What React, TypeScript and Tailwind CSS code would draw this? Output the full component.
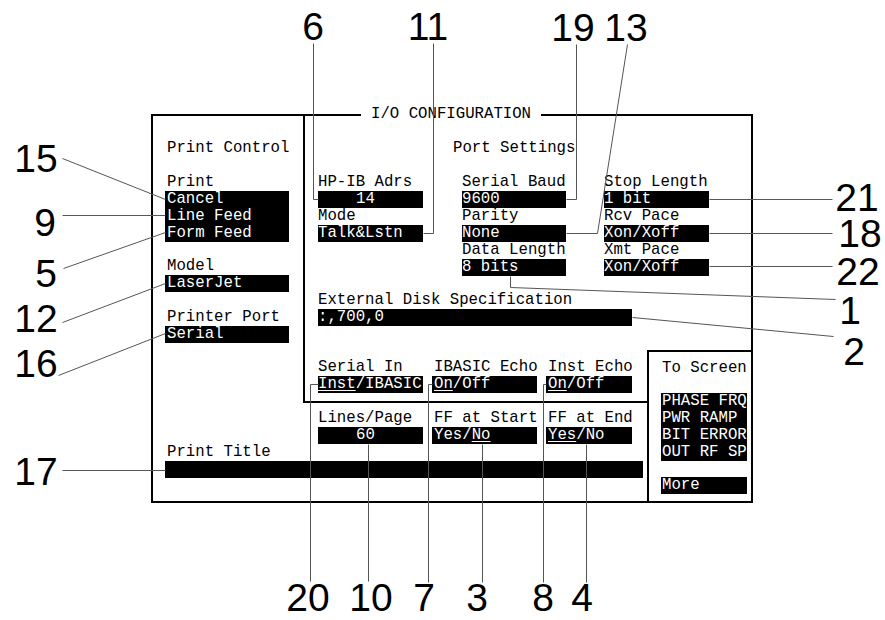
import type { ReactNode } from 'react';

type Callout = {
    label: string;
    x: number; // text centre
    y: number; // baseline
    points: [number, number][];
};

// Callout numbers and their leader lines, in page pixels
const CALLOUTS: Callout[] = [
    { label: '6', x: 313, y: 40, points: [[313, 43], [313, 199], [318, 199]] },
    { label: '11', x: 428, y: 40, points: [[433, 43], [433, 233], [423, 233]] },
    { label: '19', x: 573, y: 41, points: [[576, 44], [576, 199], [566, 199]] },
    { label: '13', x: 626, y: 41, points: [[627, 44], [597, 233], [566, 233]] },
    { label: '15', x: 36, y: 172, points: [[62, 158], [165, 199]] },
    { label: '9', x: 45, y: 236, points: [[62, 215], [165, 215]] },
    { label: '5', x: 46, y: 287, points: [[63, 268], [165, 232]] },
    { label: '12', x: 36, y: 332, points: [[62, 322], [165, 283]] },
    { label: '16', x: 36, y: 377, points: [[58, 375], [165, 333]] },
    { label: '17', x: 36, y: 485, points: [[62, 470], [165, 470]] },
    { label: '21', x: 857, y: 211, points: [[709, 199], [832, 199]] },
    { label: '18', x: 860, y: 247, points: [[709, 233], [832, 233]] },
    { label: '22', x: 858, y: 285, points: [[709, 266], [832, 266]] },
    { label: '1', x: 850, y: 324, points: [[510, 276], [510, 287], [835, 299]] },
    { label: '2', x: 854, y: 365, points: [[632, 317], [833, 336]] },
    { label: '20', x: 308, y: 611, points: [[318, 384], [310, 384], [310, 581]] },
    { label: '10', x: 371, y: 611, points: [[368, 444], [368, 581]] },
    { label: '7', x: 424, y: 611, points: [[432, 384], [428, 384], [428, 582]] },
    { label: '3', x: 477, y: 611, points: [[482, 444], [482, 582]] },
    { label: '8', x: 543, y: 611, points: [[546, 384], [543, 384], [543, 582]] },
    { label: '4', x: 582, y: 611, points: [[586, 444], [586, 582]] },
];

const Label = ({ children, className = '' }: { children?: ReactNode; className?: string }) => (
    <div className={`h-[17px] leading-[17px] whitespace-pre ${className}`}>{children}</div>
);

const Field = ({ children, className = '' }: { children?: ReactNode; className?: string }) => (
    <div className={`h-[17px] leading-[17px] whitespace-pre bg-black text-white ${className}`}>{children}</div>
);

const U = ({ children }: { children: ReactNode }) => (
    <span className="underline underline-offset-[2px] decoration-1">{children}</span>
);

const App = () => {
    return (
        <div className="relative w-[885px] h-[620px] bg-white overflow-hidden text-black">
            <div className="pl-[151px] pt-[114px]">
                <div className="relative w-[602px] h-[389px] border-2 border-black font-['Liberation_Mono',monospace] text-[15.7px]">
                    <span className="absolute -top-[10px] left-[208px] px-[10px] bg-white leading-[17px] whitespace-pre">
                        I/O CONFIGURATION
                    </span>

                    <div className="grid grid-cols-[150px_344px_104px] grid-rows-[234px_53px_98px]">
                        {/* Print control column */}
                        <div className="col-start-1 row-start-1 row-span-2 pt-[24px] pl-[12px]">
                            <Label className="pl-[2px]">Print Control</Label>
                            <Label className="mt-[17px] pl-[2px]">Print</Label>
                            <div className="w-[124px] bg-black text-white pl-[2px] leading-[17px]">
                                <div className="h-[17px]">Cancel</div>
                                <div className="h-[17px]">Line Feed</div>
                                <div className="h-[17px]">Form Feed</div>
                            </div>
                            <Label className="mt-[16px] pl-[2px]">Model</Label>
                            <Field className="w-[124px] pl-[2px]">LaserJet</Field>
                            <Label className="mt-[17px] pl-[2px]">Printer Port</Label>
                            <Field className="w-[124px] pl-[2px]">Serial</Field>
                        </div>

                        {/* Port settings */}
                        <div className="col-start-2 col-span-2 row-start-1 border-l-2 border-black pt-[24px] pl-[13px]">
                            <Label className="ml-[135px]">Port Settings</Label>
                            <div className="mt-[17px] flex">
                                <div className="w-[105px]">
                                    <Label>HP-IB Adrs</Label>
                                    <Field className="pl-[38px]">14</Field>
                                    <Label>Mode</Label>
                                    <Field>Talk&amp;Lstn</Field>
                                </div>
                                <div className="ml-[39px] w-[104px]">
                                    <Label>Serial Baud</Label>
                                    <Field>9600</Field>
                                    <Label>Parity</Label>
                                    <Field>None</Field>
                                    <Label>Data Length</Label>
                                    <Field>8 bits</Field>
                                </div>
                                <div className="ml-[38px] w-[105px]">
                                    <Label>Stop Length</Label>
                                    <Field>1 bit</Field>
                                    <Label>Rcv Pace</Label>
                                    <Field>Xon/Xoff</Field>
                                    <Label>Xmt Pace</Label>
                                    <Field>Xon/Xoff</Field>
                                </div>
                            </div>
                            <Label className="mt-[16px]">External Disk Specification</Label>
                            <Field className="w-[314px]">:,700,0</Field>
                        </div>

                        {/* Echo settings */}
                        <div className="col-start-2 row-start-2 border-l-2 border-b-2 border-black pt-[9px] pl-[13px] flex">
                            <div className="w-[105px]">
                                <Label>Serial In</Label>
                                <Field><U>Inst</U>/IBASIC</Field>
                            </div>
                            <div className="ml-[9px] w-[105px]">
                                <Label className="pl-[2px]">IBASIC Echo</Label>
                                <Field className="pl-[2px]"><U>On</U>/Off</Field>
                            </div>
                            <div className="ml-[9px] w-[86px]">
                                <Label className="pl-[2px]">Inst Echo</Label>
                                <Field className="pl-[2px]"><U>On</U>/Off</Field>
                            </div>
                        </div>

                        {/* To Screen menu */}
                        <div className="col-start-3 row-start-2 row-span-2 border-l-2 border-t-2 border-black pt-[8px]">
                            <Label className="pl-[13px]">To Screen</Label>
                            <div className="mt-[16px] ml-[12px] w-[86px] bg-black text-white pl-[1px] leading-[17px]">
                                <div className="h-[17px] whitespace-pre">PHASE FRQ</div>
                                <div className="h-[17px] whitespace-pre">PWR RAMP</div>
                                <div className="h-[17px] whitespace-pre">BIT ERROR</div>
                                <div className="h-[17px] whitespace-pre">OUT RF SP</div>
                            </div>
                            <Field className="mt-[16px] ml-[12px] w-[86px] pl-[1px]">More</Field>
                        </div>

                        {/* Page settings and print title */}
                        <div className="col-start-1 col-span-2 row-start-3 pt-[7px]">
                            <div className="flex pl-[165px]">
                                <div className="w-[105px]">
                                    <Label>Lines/Page</Label>
                                    <Field className="pl-[38px]">60</Field>
                                </div>
                                <div className="ml-[9px] w-[105px]">
                                    <Label className="pl-[2px]">FF at Start</Label>
                                    <Field className="pl-[2px]">Yes/<U>No</U></Field>
                                </div>
                                <div className="ml-[9px] w-[86px]">
                                    <Label className="pl-[2px]">FF at End</Label>
                                    <Field className="pl-[2px]"><U>Yes</U>/No</Field>
                                </div>
                            </div>
                            <Label className="pl-[14px]">Print Title</Label>
                            <Field className="ml-[12px] w-[478px]" />
                        </div>
                    </div>
                </div>
            </div>

            {/* Callout annotations */}
            <svg className="absolute inset-0 pointer-events-none" width={885} height={620}>
                {CALLOUTS.map(c => (
                    <g key={c.label}>
                        <polyline
                            points={c.points.map(([x, y]) => `${x + 0.5},${y + 0.5}`).join(' ')}
                            fill="none"
                            stroke="#555"
                            strokeWidth={1}
                        />
                        <text
                            x={c.x}
                            y={c.y}
                            textAnchor="middle"
                            fontFamily="'Liberation Sans', Arial, sans-serif"
                            fontSize={39}
                            fill="#000"
                        >
                            {c.label}
                        </text>
                    </g>
                ))}
            </svg>
        </div>
    );
};

export default App;
